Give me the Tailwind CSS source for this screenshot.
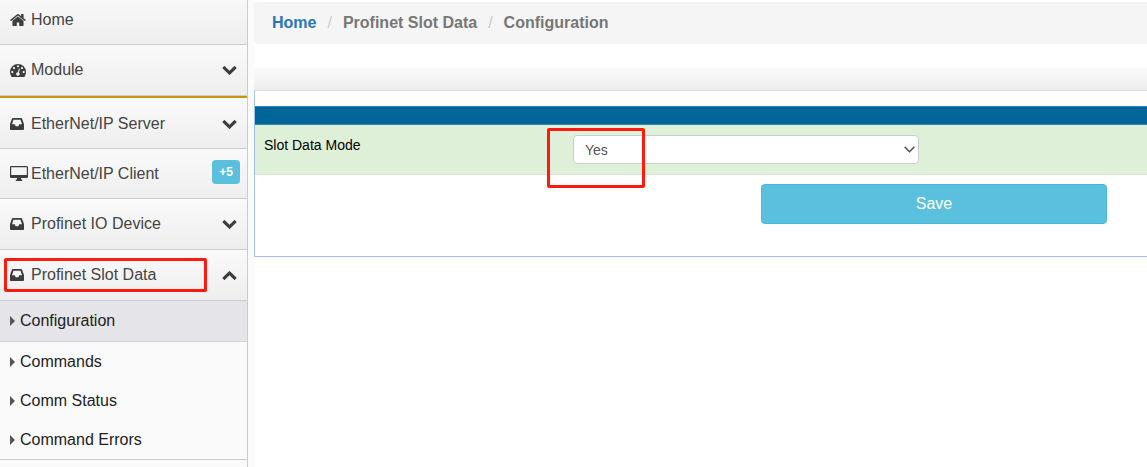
<!DOCTYPE html>
<html lang="en">
<head>
<meta charset="utf-8">
<meta name="viewport" content="width=device-width, initial-scale=1">
<title>Profinet Slot Data - Configuration</title>
<script src="https://cdn.jsdelivr.net/npm/@tailwindcss/browser@4"></script>
</head>
<body class="flex min-h-screen bg-white font-['Liberation_Sans',Arial,sans-serif] text-base leading-6 text-[#444]">
<svg class="hidden" aria-hidden="true">
  <symbol id="inbox" viewBox="0 0 14 12"><path fill-rule="evenodd" d="M2.9 0h8.2q.7 0 1 .7L14 6v5.2q0 .8-.8.8H.8Q0 12 0 11.2V6L1.900 .7Q2.200 0 2.900 0zM3.500 1.700 2 6.300h2.700l1 2h2.600l1-2H12l-1.500-4.600z"/></symbol>
  <symbol id="chevron" viewBox="90 533 1612 1035"><path d="M1683 808l-742 741q-19 19-45 19t-45-19l-742-741q-19-19-19-45.5t19-45.5l166-165q19-19 45-19t45 19l531 531 531-531q19-19 45-19t45 19l166 165q19 19 19 45.5t-19 45.5z"/></symbol>
  <symbol id="caret" viewBox="0 0 5 10"><path d="M0 0l5 5-5 5z"/></symbol>
</svg>

<nav class="w-[248px] shrink-0 border-r border-[#ccc] bg-[#fafafa]" aria-label="Main menu">
  <a href="#" class="flex h-[45px] items-center border-b border-[#ccc] bg-linear-to-b from-[#f8f8f8] to-[#eee] pr-2 pb-1 pl-2.5">
    <span class="w-[21px]"><svg class="h-3 w-4 fill-[#3d3d3d]" viewBox="0 250 1664 1290" preserveAspectRatio="none"><path d="M1408 992v480q0 26-19 45t-45 19h-384v-384h-256v384h-384q-26 0-45-19t-19-45v-480q0-1 .5-3t.5-3l575-474 575 474q1 2 1 6zm223-69l-62 74q-8 9-21 11h-3q-13 0-21-7l-692-577-692 577q-12 8-24 7-13-2-21-11l-62-74q-8-10-7-23.500t11-21.500l719-599q32-26 76-26t76 26l244 204v-195q0-14 9-23t23-9h192q14 0 23 9t9 23v408l219 182q10 8 11 21.500t-7 23.500z"/></svg></span>
    <span class="grow">Home</span>
  </a>
  <a href="#" class="flex h-[51px] items-center border-b border-[#ccc] bg-linear-to-b from-[#fafafa] to-[#eee] pr-2.5 pl-2.5">
    <span class="w-[21px]"><svg class="h-[13px] w-4 fill-[#3d3d3d]" viewBox="0 0 16 13"><path fill-rule="evenodd" d="M8 0a8 8 0 0 1 8 8q0 2.600-1.300 4.500-.3.500-.9.500H2.200q-.6 0-.9-.5Q0 10.600 0 8a8 8 0 0 1 8-8zM2.300 7a1.100 1.100 0 1 0 0 2.200 1.100 1.100 0 0 0 0-2.200zM4 3a1.100 1.100 0 1 0 0 2.200A1.100 1.100 0 0 0 4 3zM8 1.200a1.100 1.100 0 1 0 0 2.200 1.100 1.100 0 0 0 0-2.200zM12 3a1.100 1.100 0 1 0 0 2.200A1.100 1.100 0 0 0 12 3zM13.700 7a1.100 1.100 0 1 0 0 2.200 1.100 1.100 0 0 0 0-2.200zM9 4.500 7.900 8.200a1.800 1.800 0 1 0 1 .3L10 4.800z"/></svg></span>
    <span class="grow">Module</span>
    <svg class="h-[9px] w-[15px] fill-[#3d3d3d]"><use href="#chevron"/></svg>
  </a>
  <a href="#" class="flex h-[53px] items-center border-t-2 border-b border-t-[#c8960c] border-b-[#ccc] bg-linear-to-b from-[#fafafa] to-[#eee] pt-0.5 pr-2.5 pl-2.5">
    <span class="w-[21px]"><svg class="h-3 w-3.5 fill-[#3d3d3d]"><use href="#inbox"/></svg></span>
    <span class="grow">EtherNet/IP Server</span>
    <svg class="h-[9px] w-[15px] fill-[#3d3d3d]"><use href="#chevron"/></svg>
  </a>
  <a href="#" class="flex h-[50px] items-center border-b border-[#ccc] bg-linear-to-b from-[#fafafa] to-[#eee] pr-[7px] pl-2.5">
    <span class="w-[21px]"><svg class="h-[15px] w-[18px] fill-[#3d3d3d]" viewBox="0 0 18 15"><path fill-rule="evenodd" d="M1.300 0h15.400Q18 0 18 1.300v9.400q0 1.300-1.300 1.300H11v1.500h1.200V15H5.800v-1.500H7V12H1.300Q0 12 0 10.700V1.300Q0 0 1.300 0zM1.200 1.200v7.900h15.600V1.200z"/></svg></span>
    <span class="grow">EtherNet/IP Client</span>
    <span class="mb-1 h-6 rounded-sm bg-[#5bc0de] px-[7px] text-xs leading-6 font-bold text-white">+5</span>
  </a>
  <a href="#" class="flex h-[51px] items-center border-b border-[#ccc] bg-linear-to-b from-[#fafafa] to-[#eee] pr-2.5 pl-2.5">
    <span class="w-[21px]"><svg class="h-3 w-3.5 fill-[#3d3d3d]"><use href="#inbox"/></svg></span>
    <span class="grow">Profinet IO Device</span>
    <svg class="h-[9px] w-[15px] fill-[#3d3d3d]"><use href="#chevron"/></svg>
  </a>
  <a href="#" aria-expanded="true" class="relative flex h-[51px] items-center border-b border-[#ccc] bg-linear-to-b from-[#fafafa] to-[#eee] pr-2.5 pl-2.5">
    <span class="w-[21px]"><svg class="h-3 w-3.5 fill-[#3d3d3d]"><use href="#inbox"/></svg></span>
    <span class="grow">Profinet Slot Data</span>
    <svg class="h-[9px] w-[15px] rotate-180 fill-[#3d3d3d]"><use href="#chevron"/></svg>
    <span class="absolute top-2 left-1 h-[34px] w-[203px] rounded-xs border-3 border-[#fe1b0e]"></span>
  </a>
  <ul class="border-b border-[#ccc] text-[#222]">
    <li><a href="#" aria-current="page" class="flex h-[41px] items-center gap-[5px] border-b border-[#d6d6da] bg-[#e4e4e9] pl-2.5"><svg class="h-2.5 w-[5px] fill-[#555]"><use href="#caret"/></svg>Configuration</a></li>
    <li><a href="#" class="flex h-[39px] items-center gap-[5px] pl-2.5"><svg class="h-2.5 w-[5px] fill-[#555]"><use href="#caret"/></svg>Commands</a></li>
    <li><a href="#" class="flex h-[39px] items-center gap-[5px] pl-2.5"><svg class="h-2.5 w-[5px] fill-[#555]"><use href="#caret"/></svg>Comm Status</a></li>
    <li><a href="#" class="flex h-[39px] items-center gap-[5px] pl-2.5"><svg class="h-2.5 w-[5px] fill-[#555]"><use href="#caret"/></svg>Command Errors</a></li>
  </ul>
</nav>

<main class="min-w-0 grow border-l-6 border-[#fbfbfb] pt-0.5">
  <nav aria-label="Breadcrumb" class="rounded-l bg-[#f5f5f5] px-[18px] py-[9px] font-bold text-[#777]">
    <ol class="flex gap-[11px]">
      <li><a href="#" class="text-[#2a75b8]">Home</a></li>
      <li aria-hidden="true" class="font-normal text-[#ccc]">/</li>
      <li>Profinet Slot Data</li>
      <li aria-hidden="true" class="font-normal text-[#ccc]">/</li>
      <li aria-current="page">Configuration</li>
    </ol>
  </nav>
  <div class="mt-6 h-[23px] border-b border-[#ddd] bg-linear-to-b from-[#fafafa] to-[#eee]"></div>
  <form class="border-b border-l border-[#a3c0ea] pt-[15px] pb-8">
    <div class="h-[19px] border-y border-[#3385ad] bg-[#006699]"></div>
    <div class="grid grid-cols-[318fr_346fr_228fr] border-b border-[#ddd] bg-[#dff0d8] py-2.5">
      <label for="mode" class="pl-[9px] text-sm leading-5 text-black">Slot Data Mode</label>
      <div class="relative">
        <select id="mode" class="block h-[29px] w-full appearance-none rounded border border-[#ccc] bg-white px-[11px] text-sm text-[#555]">
          <option>Yes</option>
          <option>No</option>
        </select>
        <svg class="pointer-events-none absolute top-[11px] right-1 h-[7px] w-[11px] fill-none stroke-[#555]" viewBox="0 0 11 7" stroke-width="1.500"><path d="M.7.900 5.500 5.700 10.300.9"/></svg>
        <span class="pointer-events-none absolute -top-[7px] -left-[26px] h-[60px] w-[98px] rounded-xs border-3 border-[#fe1b0e]"></span>
      </div>
    </div>
    <div class="grid grid-cols-[506fr_346fr_40fr] pt-[9px]">
      <button type="button" class="col-start-2 h-10 rounded border border-[#46b8da] bg-[#5bc0de] text-white">Save</button>
    </div>
  </form>
</main>
</body>
</html>
